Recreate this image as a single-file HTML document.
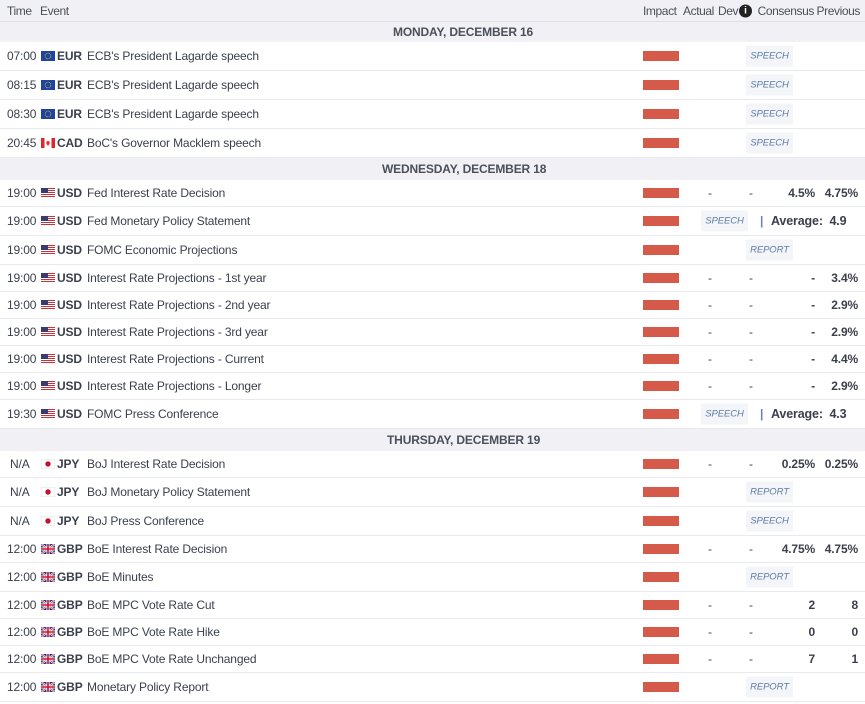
<!DOCTYPE html>
<html><head><meta charset="utf-8"><style>
*{margin:0;padding:0;box-sizing:border-box}
body{width:865px;height:704px;background:#fff;font-family:"Liberation Sans",Arial,sans-serif;font-size:12px;color:#3a3f4b;position:relative;overflow:hidden;letter-spacing:-0.15px}
.r{position:absolute;left:0;width:865px;border-bottom:1px solid #e8e9ee;background:#fff}
.r>*{position:absolute;top:50%;transform:translateY(-50%);white-space:nowrap}
.h{background:#f1f1f5;color:#4a4f5a;border-bottom:1px solid #dfe0e6}
.dh{background:#f1f1f5;font-weight:bold;color:#4a4f5a;border-bottom:none}
.t{left:7px}
.f{left:41px;width:14px;height:10px}
.c{left:57px;font-weight:bold}
.e{left:87px}
.i{left:643px;width:36px;height:10px;background:#d65a4a}
.a{left:708px}
.d{left:749px}
.cs{right:50px;font-weight:bold}
.p{right:7px;font-weight:bold}
.tag{font-style:italic;font-size:9.5px;color:#5f7ca8;background:#f3f5f8;padding:5px 0;letter-spacing:-0.1px;width:47px;text-align:center}
.avg{left:771px;font-weight:bold;font-size:12.5px}
.bar{left:760px;color:#6a85ad;font-weight:bold}
</style></head><body>
<svg width="0" height="0" style="position:absolute">
<defs>
<symbol id="eu" viewBox="0 0 14 10"><rect width="14" height="10" fill="#1f43a0"/><circle cx="7" cy="5" r="2.8" fill="none" stroke="#e8c400" stroke-width="0.8" stroke-dasharray="0.8 0.6"/></symbol>
<symbol id="us" viewBox="0 0 14 10"><rect width="14" height="10" fill="#fff"/><g fill="#c8323b"><rect y="0" width="14" height="1"/><rect y="2" width="14" height="1"/><rect y="4" width="14" height="1"/><rect y="6" width="14" height="1"/><rect y="8" width="14" height="1"/></g><rect width="7" height="5" fill="#3c3b6e"/></symbol>
<symbol id="ca" viewBox="0 0 14 10"><rect width="14" height="10" fill="#fff"/><rect width="3.5" height="10" fill="#e0262b"/><rect x="10.5" width="3.5" height="10" fill="#e0262b"/><path d="M7 2.2L7.8 3.8 8.9 3.5 8.3 5.6 9 5.8 7.3 7 7.3 8.2 6.7 8.2 6.7 7 5 5.8 5.7 5.6 5.1 3.5 6.2 3.8Z" fill="#e0262b"/></symbol>
<symbol id="jp" viewBox="0 0 14 10"><rect x="0.25" y="0.25" width="13.5" height="9.5" fill="#fff" stroke="#e2e2e2" stroke-width="0.5"/><circle cx="7" cy="5" r="2.7" fill="#c8102e"/></symbol>
<symbol id="gb" viewBox="0 0 14 10"><rect width="14" height="10" fill="#1f3d8a"/><path d="M0 0L14 10M14 0L0 10" stroke="#fff" stroke-width="2"/><path d="M0 0L14 10M14 0L0 10" stroke="#c8102e" stroke-width="0.7"/><path d="M7 0V10M0 5H14" stroke="#fff" stroke-width="3"/><path d="M7 0V10M0 5H14" stroke="#c8102e" stroke-width="1.6"/></symbol>
</defs></svg>

<div class="r h" style="top:0;height:22px;letter-spacing:-0.4px"><span class="t">Time</span><span style="left:40px">Event</span><span style="left:643px">Impact</span><span style="left:683px">Actual</span><span style="left:718px">Dev</span><span style="left:739px;width:13px;height:13px;border-radius:50%;background:#222;color:#fff;font-size:10px;font-weight:bold;text-align:center;line-height:13px;letter-spacing:0">i</span><span style="right:51px">Consensus</span><span style="right:5px">Previous</span></div>

<div class="r dh" style="top:22px;height:20px"><span style="left:393px">MONDAY, DECEMBER 16</span></div>
<div class="r" style="top:42px;height:29px"><span class="t">07:00</span><svg class="f"><use href="#eu"/></svg><span class="c">EUR</span><span class="e">ECB's President Lagarde speech</span><span class="i"></span><span class="tag" style="left:746px">SPEECH</span></div>
<div class="r" style="top:71px;height:29px"><span class="t">08:15</span><svg class="f"><use href="#eu"/></svg><span class="c">EUR</span><span class="e">ECB's President Lagarde speech</span><span class="i"></span><span class="tag" style="left:746px">SPEECH</span></div>
<div class="r" style="top:100px;height:29px"><span class="t">08:30</span><svg class="f"><use href="#eu"/></svg><span class="c">EUR</span><span class="e">ECB's President Lagarde speech</span><span class="i"></span><span class="tag" style="left:746px">SPEECH</span></div>
<div class="r" style="top:129px;height:29px"><span class="t">20:45</span><svg class="f"><use href="#ca"/></svg><span class="c">CAD</span><span class="e">BoC's Governor Macklem speech</span><span class="i"></span><span class="tag" style="left:746px">SPEECH</span></div>

<div class="r dh" style="top:158px;height:22px"><span style="left:382px">WEDNESDAY, DECEMBER 18</span></div>
<div class="r" style="top:180px;height:27px"><span class="t">19:00</span><svg class="f"><use href="#us"/></svg><span class="c">USD</span><span class="e">Fed Interest Rate Decision</span><span class="i"></span><span class="a">-</span><span class="d">-</span><span class="cs">4.5%</span><span class="p">4.75%</span></div>
<div class="r" style="top:207px;height:29px"><span class="t">19:00</span><svg class="f"><use href="#us"/></svg><span class="c">USD</span><span class="e">Fed Monetary Policy Statement</span><span class="i"></span><span class="tag" style="left:701px">SPEECH</span><span class="bar">|</span><span class="avg">Average:&nbsp; 4.9</span></div>
<div class="r" style="top:236px;height:29px"><span class="t">19:00</span><svg class="f"><use href="#us"/></svg><span class="c">USD</span><span class="e">FOMC Economic Projections</span><span class="i"></span><span class="tag" style="left:746px">REPORT</span></div>
<div class="r" style="top:265px;height:27px"><span class="t">19:00</span><svg class="f"><use href="#us"/></svg><span class="c">USD</span><span class="e">Interest Rate Projections - 1st year</span><span class="i"></span><span class="a">-</span><span class="d">-</span><span class="cs">-</span><span class="p">3.4%</span></div>
<div class="r" style="top:292px;height:27px"><span class="t">19:00</span><svg class="f"><use href="#us"/></svg><span class="c">USD</span><span class="e">Interest Rate Projections - 2nd year</span><span class="i"></span><span class="a">-</span><span class="d">-</span><span class="cs">-</span><span class="p">2.9%</span></div>
<div class="r" style="top:319px;height:27px"><span class="t">19:00</span><svg class="f"><use href="#us"/></svg><span class="c">USD</span><span class="e">Interest Rate Projections - 3rd year</span><span class="i"></span><span class="a">-</span><span class="d">-</span><span class="cs">-</span><span class="p">2.9%</span></div>
<div class="r" style="top:346px;height:27px"><span class="t">19:00</span><svg class="f"><use href="#us"/></svg><span class="c">USD</span><span class="e">Interest Rate Projections - Current</span><span class="i"></span><span class="a">-</span><span class="d">-</span><span class="cs">-</span><span class="p">4.4%</span></div>
<div class="r" style="top:373px;height:27px"><span class="t">19:00</span><svg class="f"><use href="#us"/></svg><span class="c">USD</span><span class="e">Interest Rate Projections - Longer</span><span class="i"></span><span class="a">-</span><span class="d">-</span><span class="cs">-</span><span class="p">2.9%</span></div>
<div class="r" style="top:400px;height:29px"><span class="t">19:30</span><svg class="f"><use href="#us"/></svg><span class="c">USD</span><span class="e">FOMC Press Conference</span><span class="i"></span><span class="tag" style="left:701px">SPEECH</span><span class="bar">|</span><span class="avg">Average:&nbsp; 4.3</span></div>

<div class="r dh" style="top:429px;height:22px"><span style="left:387px">THURSDAY, DECEMBER 19</span></div>
<div class="r" style="top:451px;height:27px"><span class="t" style="left:10px">N/A</span><svg class="f"><use href="#jp"/></svg><span class="c">JPY</span><span class="e">BoJ Interest Rate Decision</span><span class="i"></span><span class="a">-</span><span class="d">-</span><span class="cs">0.25%</span><span class="p">0.25%</span></div>
<div class="r" style="top:478px;height:29px"><span class="t" style="left:10px">N/A</span><svg class="f"><use href="#jp"/></svg><span class="c">JPY</span><span class="e">BoJ Monetary Policy Statement</span><span class="i"></span><span class="tag" style="left:746px">REPORT</span></div>
<div class="r" style="top:507px;height:29px"><span class="t" style="left:10px">N/A</span><svg class="f"><use href="#jp"/></svg><span class="c">JPY</span><span class="e">BoJ Press Conference</span><span class="i"></span><span class="tag" style="left:746px">SPEECH</span></div>
<div class="r" style="top:536px;height:27px"><span class="t">12:00</span><svg class="f"><use href="#gb"/></svg><span class="c">GBP</span><span class="e">BoE Interest Rate Decision</span><span class="i"></span><span class="a">-</span><span class="d">-</span><span class="cs">4.75%</span><span class="p">4.75%</span></div>
<div class="r" style="top:563px;height:29px"><span class="t">12:00</span><svg class="f"><use href="#gb"/></svg><span class="c">GBP</span><span class="e">BoE Minutes</span><span class="i"></span><span class="tag" style="left:746px">REPORT</span></div>
<div class="r" style="top:592px;height:27px"><span class="t">12:00</span><svg class="f"><use href="#gb"/></svg><span class="c">GBP</span><span class="e">BoE MPC Vote Rate Cut</span><span class="i"></span><span class="a">-</span><span class="d">-</span><span class="cs">2</span><span class="p">8</span></div>
<div class="r" style="top:619px;height:27px"><span class="t">12:00</span><svg class="f"><use href="#gb"/></svg><span class="c">GBP</span><span class="e">BoE MPC Vote Rate Hike</span><span class="i"></span><span class="a">-</span><span class="d">-</span><span class="cs">0</span><span class="p">0</span></div>
<div class="r" style="top:646px;height:27px"><span class="t">12:00</span><svg class="f"><use href="#gb"/></svg><span class="c">GBP</span><span class="e">BoE MPC Vote Rate Unchanged</span><span class="i"></span><span class="a">-</span><span class="d">-</span><span class="cs">7</span><span class="p">1</span></div>
<div class="r" style="top:673px;height:29px"><span class="t">12:00</span><svg class="f"><use href="#gb"/></svg><span class="c">GBP</span><span class="e">Monetary Policy Report</span><span class="i"></span><span class="tag" style="left:746px">REPORT</span></div>
</body></html>
